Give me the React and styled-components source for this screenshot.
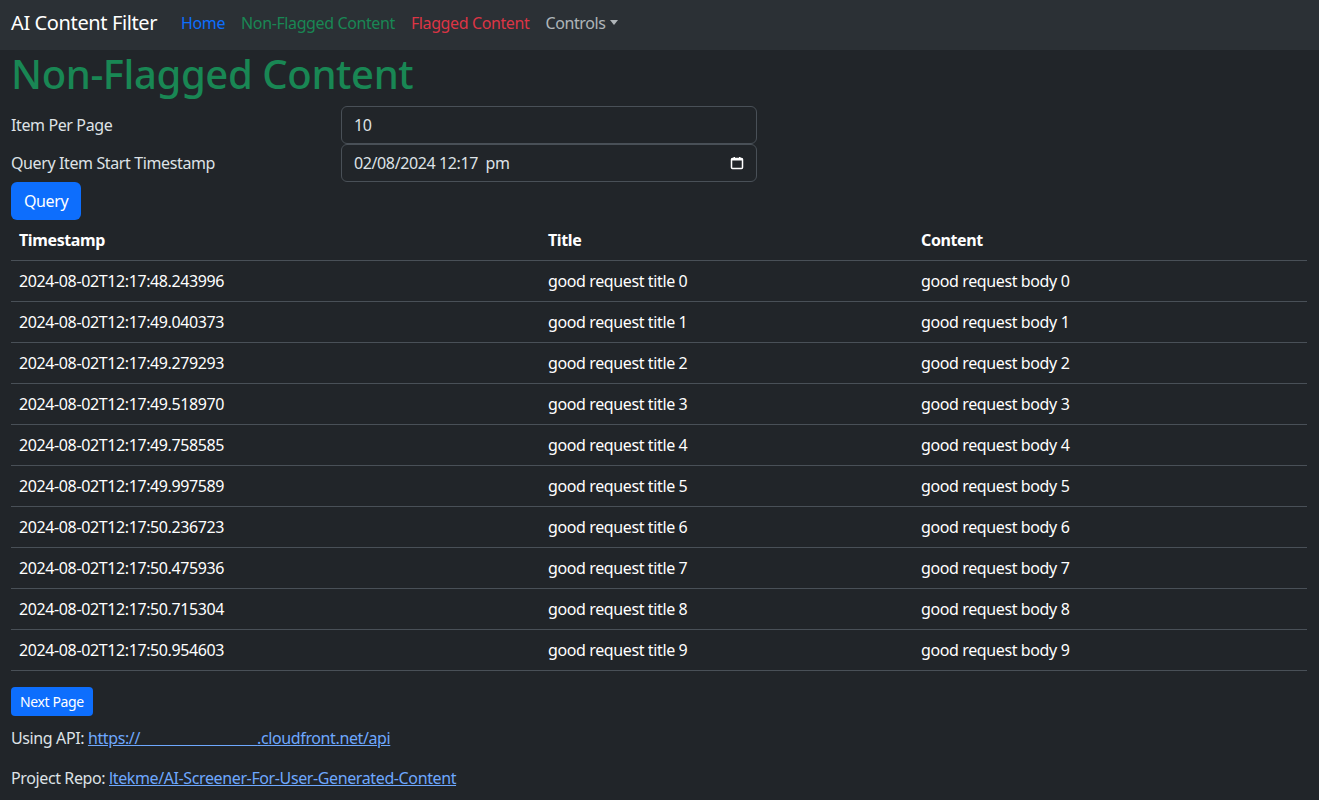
import React from "react";
import styled, { createGlobalStyle } from "styled-components";

const GlobalStyle = createGlobalStyle`
  body {
    margin: 0;
    background: #212529;
    color: #dee2e6;
    font-family: "Noto Sans", "Open Sans", sans-serif;
    font-size: 16px;
    line-height: 1.5;
    letter-spacing: -0.024em;
  }
  * { box-sizing: border-box; }
`;

const Navbar = styled.nav`
  height: 50px;
  background: #2b3035;
  display: flex;
  align-items: center;
  padding: 0 11px 5px;
`;

const Brand = styled.a`
  font-size: 20px;
  color: #fff;
  margin-right: 16px;
  text-decoration: none;
`;

const NavLink = styled.a`
  color: ${(p) => p.color};
  padding: 0 8px;
  text-decoration: none;
  display: flex;
  align-items: center;
`;

const Caret = styled.span`
  display: inline-block;
  margin-left: 4px;
  border-top: 5px solid currentColor;
  border-left: 4px solid transparent;
  border-right: 4px solid transparent;
`;

const Main = styled.main`
  padding: 0 12px 0 11px;
`;

const Heading = styled.h1`
  font-size: 40px;
  font-weight: 500;
  line-height: 1.2;
  color: #198754;
  margin: 0 0 8px;
`;

const Form = styled.div`
  display: grid;
  grid-template-columns: 330px 416px;
  align-items: center;
`;

const Label = styled.label`
  color: #dee2e6;
`;

const Field = styled.div`
  height: 38px;
  border: 1px solid #495057;
  border-radius: 6px;
  background: #212529;
  padding: 6px 12px;
  display: flex;
  align-items: center;
  justify-content: space-between;
  color: #dee2e6;
`;

const Button = styled.button`
  background: #0d6efd;
  color: #fff;
  border: none;
  font-family: inherit;
  letter-spacing: inherit;
  font-size: ${(p) => (p.small ? "14px" : "16px")};
  line-height: 1.5;
  padding: ${(p) => (p.small ? "4px 9px" : "7px 13px")};
  border-radius: ${(p) => (p.small ? "4px" : "6px")};
  cursor: pointer;
`;

const Table = styled.table`
  width: 100%;
  border-collapse: collapse;
  margin-bottom: 16px;
  color: #fff;

  th {
    font-weight: 700;
    text-align: left;
  }

  th,
  td {
    padding: 8px;
    border-bottom: 1px solid #495057;
  }
`;

const Para = styled.p`
  margin: ${(p) => (p.first ? "10px" : "0")} 0 16px;
`;

const Link = styled.a`
  color: #6ea8fe;
  text-decoration: underline;
`;

const rows = [
  "48.243996",
  "49.040373",
  "49.279293",
  "49.518970",
  "49.758585",
  "49.997589",
  "50.236723",
  "50.475936",
  "50.715304",
  "50.954603",
];

const CalendarIcon = () => (
  <svg width="14" height="14" viewBox="0 0 14 14">
    <rect x="1.5" y="2.5" width="11" height="10" rx="1" fill="none" stroke="#fff" strokeWidth="1.5" />
    <rect x="1.5" y="2.5" width="11" height="2" fill="#fff" />
    <rect x="3.5" y="1" width="1.5" height="2" fill="#fff" />
    <rect x="9" y="1" width="1.5" height="2" fill="#fff" />
  </svg>
);

export default function App() {
  return (
    <>
      <GlobalStyle />
      <Navbar>
        <Brand href="#">AI Content Filter</Brand>
        <NavLink color="#0d6efd" href="#">Home</NavLink>
        <NavLink color="#198754" href="#">Non-Flagged Content</NavLink>
        <NavLink color="#dc3545" href="#">Flagged Content</NavLink>
        <NavLink color="rgba(222,226,230,0.75)" href="#">
          Controls
          <Caret />
        </NavLink>
      </Navbar>
      <Main>
        <Heading>Non-Flagged Content</Heading>
        <Form>
          <Label>Item Per Page</Label>
          <Field>10</Field>
          <Label>Query Item Start Timestamp</Label>
          <Field>
            <span>02/08/2024 12:17&nbsp; pm</span>
            <CalendarIcon />
          </Field>
        </Form>
        <Button>Query</Button>
        <Table>
          <colgroup>
            <col style={{ width: "529px" }} />
            <col style={{ width: "373px" }} />
            <col />
          </colgroup>
          <thead>
            <tr>
              <th>Timestamp</th>
              <th>Title</th>
              <th>Content</th>
            </tr>
          </thead>
          <tbody>
            {rows.map((t, i) => (
              <tr key={i}>
                <td>2024-08-02T12:17:{t}</td>
                <td>good request title {i}</td>
                <td>good request body {i}</td>
              </tr>
            ))}
          </tbody>
        </Table>
        <Button small>Next Page</Button>
        <Para first>
          Using API:{" "}
          <Link href="#">
            https://{"\u00a0".repeat(31)}.cloudfront.net/api
          </Link>
        </Para>
        <Para>
          Project Repo:{" "}
          <Link href="#">ltekme/AI-Screener-For-User-Generated-Content</Link>
        </Para>
      </Main>
    </>
  );
}
